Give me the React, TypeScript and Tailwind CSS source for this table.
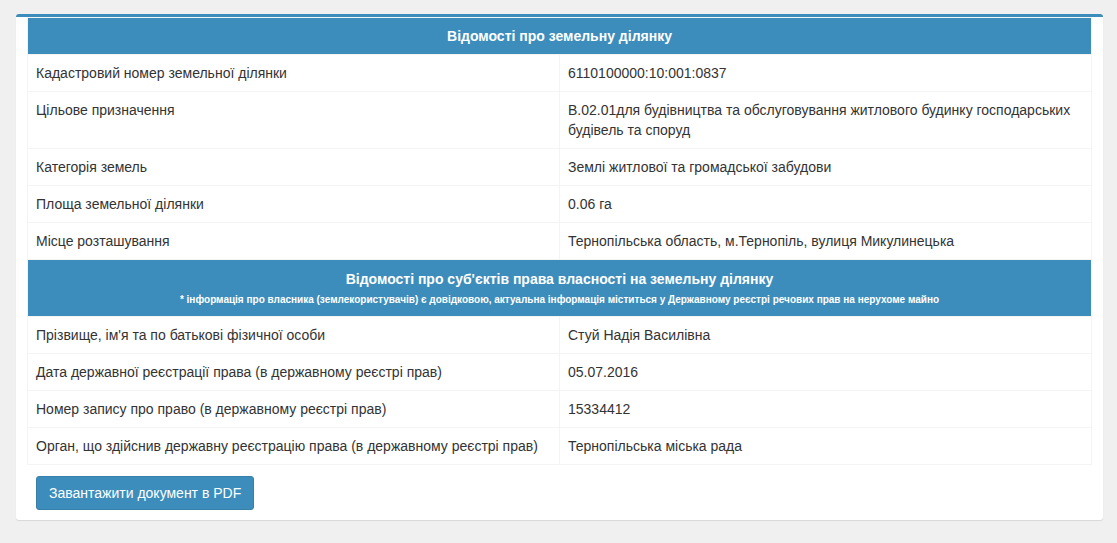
const land: [string, string][] = [
  ["Кадастровий номер земельної ділянки", "6110100000:10:001:0837"],
  [
    "Цільове призначення",
    "В.02.01для будівництва та обслуговування житлового будинку господарських будівель та споруд",
  ],
  ["Категорія земель", "Землі житлової та громадської забудови"],
  ["Площа земельної ділянки", "0.06 га"],
  ["Місце розташування", "Тернопільська область, м.Тернопіль, вулиця Микулинецька"],
];

const owner: [string, string][] = [
  ["Прізвище, ім'я та по батькові фізичної особи", "Стуй Надія Василівна"],
  ["Дата державної реєстрації права (в державному реєстрі прав)", "05.07.2016"],
  ["Номер запису про право (в державному реєстрі прав)", "15334412"],
  ["Орган, що здійснив державну реєстрацію права (в державному реєстрі прав)", "Тернопільська міська рада"],
];

function Row({ label, value }: { label: string; value: string }) {
  return (
    <tr>
      <td className="w-1/2 border border-[#f4f4f4] px-2 py-2 align-top leading-5">{label}</td>
      <td className="w-1/2 border border-[#f4f4f4] px-2 py-2 align-top leading-5">{value}</td>
    </tr>
  );
}

export default function App() {
  return (
    <div className="min-h-[543px] bg-[#f0f0f0] pl-4 pr-[14px] pt-[14px] pb-6 font-['Liberation_Sans',Arial,sans-serif] text-sm text-[#333]">
      <div className="rounded-[3px] border-t-[3px] border-[#3c8dbc] bg-white px-[11px] pb-[10px] shadow-[0_1px_1px_rgba(0,0,0,0.1)]">
        <table className="w-full table-fixed border-collapse border border-[#f4f4f4]">
          <tbody>
            <tr>
              <th colSpan={2} className="bg-[#3c8dbc] px-2 py-2 text-center text-sm font-bold leading-5 text-white">
                Відомості про земельну ділянку
              </th>
            </tr>
            {land.map(([l, v]) => (
              <Row key={l} label={l} value={v} />
            ))}
            <tr>
              <th colSpan={2} className="bg-[#3c8dbc] px-2 pt-[9px] pb-2 text-center font-bold text-white">
                <div className="text-sm leading-5">Відомості про суб'єктів права власності на земельну ділянку</div>
                <div className="mt-[2px] text-[10px] leading-[17px]">
                  * інформація про власника (землекористувачів) є довідковою, актуальна інформація міститься у Державному реєстрі речових прав на нерухоме майно
                </div>
              </th>
            </tr>
            {owner.map(([l, v]) => (
              <Row key={l} label={l} value={v} />
            ))}
          </tbody>
        </table>
        <button className="ml-[9px] mt-[11px] rounded-[3px] border border-[#367fa9] bg-[#3c8dbc] px-3 py-[6px] text-sm leading-5 text-white">
          Завантажити документ в PDF
        </button>
      </div>
    </div>
  );
}
